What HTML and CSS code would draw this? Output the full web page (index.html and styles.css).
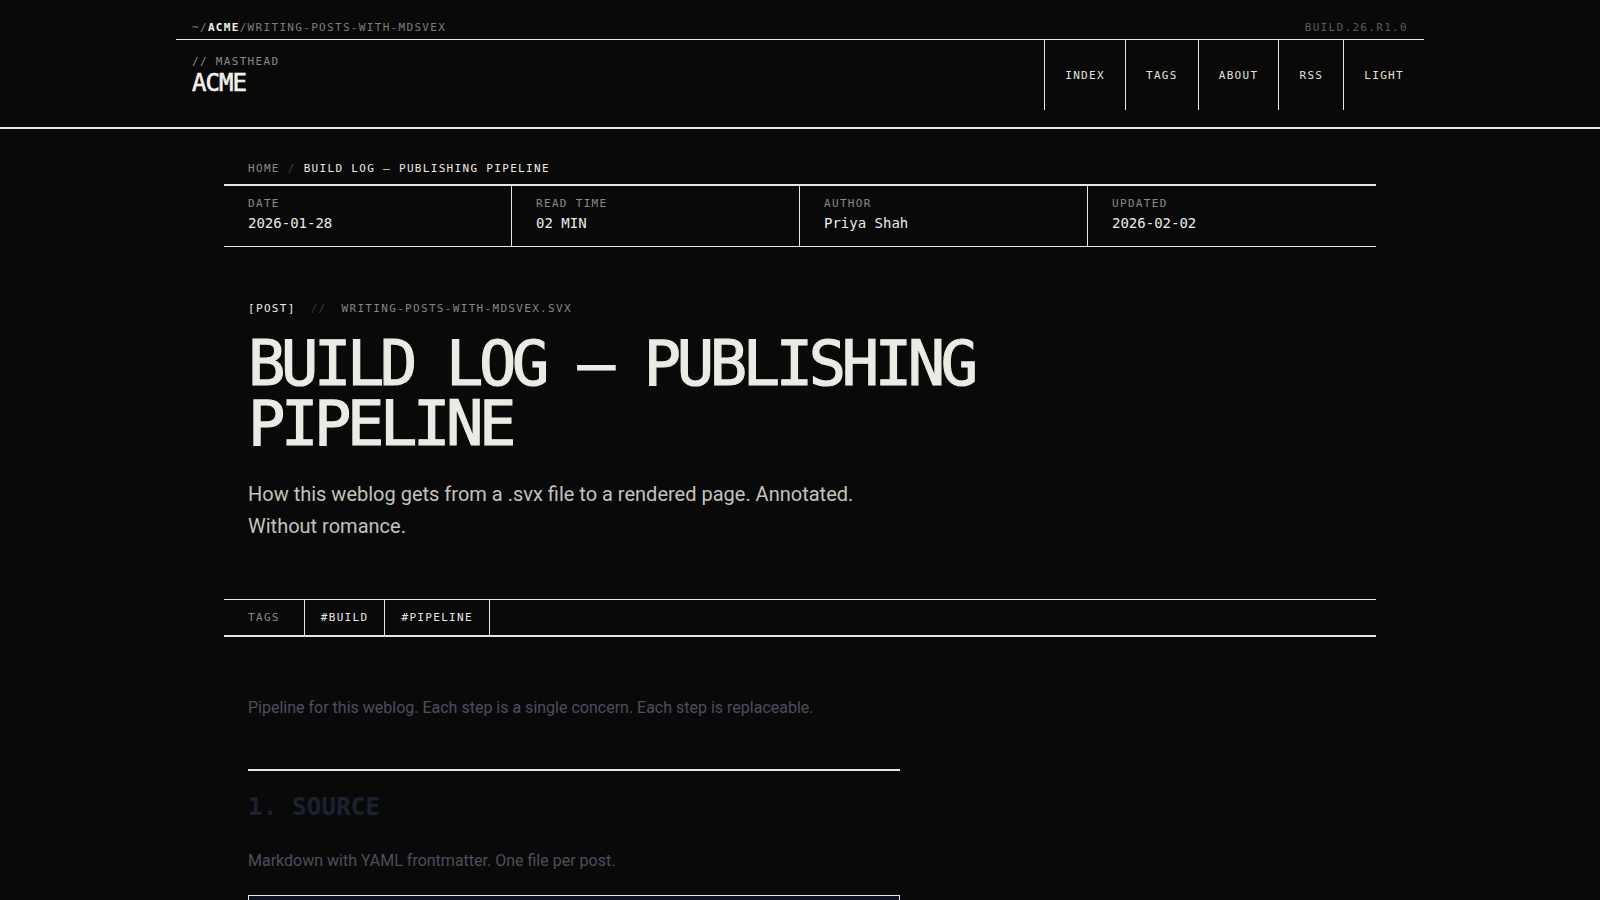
FILE: index.html
```html
<!DOCTYPE html>
<html lang="en">
<head>
<meta charset="utf-8">
<title>Build log — Publishing pipeline · ACME</title>
<link rel="stylesheet" href="styles.css">
</head>
<body>
<header class="site-header">
  <div class="header-inner">
    <div class="topbar">
      <div class="path"><span class="path-dim">~/</span><span class="path-root">ACME</span><span class="path-dim">/WRITING-POSTS-WITH-MDSVEX</span></div>
      <div class="build">BUILD.26.R1.0</div>
    </div>
    <div class="masthead-row">
      <div class="masthead">
        <div class="masthead-label">// MASTHEAD</div>
        <a class="brand" href="#">ACME</a>
      </div>
      <nav class="nav">
        <a class="nav-item" href="#">INDEX</a>
        <a class="nav-item" href="#">TAGS</a>
        <a class="nav-item" href="#">ABOUT</a>
        <a class="nav-item" href="#">RSS</a>
        <a class="nav-item" href="#">LIGHT</a>
      </nav>
    </div>
  </div>
</header>

<main class="page">
  <div class="crumbs"><a class="crumb-link" href="#">HOME</a> <span class="crumb-sep">/</span> <span class="crumb-current">BUILD LOG — PUBLISHING PIPELINE</span></div>

  <dl class="meta">
    <div class="meta-cell"><dt class="meta-label">DATE</dt><dd class="meta-value">2026-01-28</dd></div>
    <div class="meta-cell"><dt class="meta-label">READ TIME</dt><dd class="meta-value">02 MIN</dd></div>
    <div class="meta-cell"><dt class="meta-label">AUTHOR</dt><dd class="meta-value">Priya Shah</dd></div>
    <div class="meta-cell"><dt class="meta-label">UPDATED</dt><dd class="meta-value">2026-02-02</dd></div>
  </dl>

  <header class="post-head">
    <div class="kicker"><span class="kicker-type">[POST]</span><span class="kicker-sep">//</span><span class="kicker-file">WRITING-POSTS-WITH-MDSVEX.SVX</span></div>
    <h1 class="title">BUILD LOG — PUBLISHING PIPELINE</h1>
    <p class="lede">How this weblog gets from a .svx file to a rendered page. Annotated. Without romance.</p>
  </header>

  <div class="tags">
    <span class="tags-label">TAGS</span>
    <a class="tag" href="#">#BUILD</a>
    <a class="tag" href="#">#PIPELINE</a>
  </div>

  <article class="prose">
    <p>Pipeline for this weblog. Each step is a single concern. Each step is replaceable.</p>
    <hr class="rule">
    <h2 class="step">1. SOURCE</h2>
    <p>Markdown with YAML frontmatter. One file per post.</p>
    <pre class="code"><code>---
title: Build log — publishing pipeline
date: 2026-01-28
tags: [build, pipeline]
---</code></pre>
  </article>
</main>
</body>
</html>
```

FILE: styles.css
```css
* {
  box-sizing: border-box;
  margin: 0;
  padding: 0;
}

html,
body {
  background: #0a0909;
}

body {
  color: #e8e6e1;
  font-family: "DejaVu Sans Mono", "Liberation Mono", monospace;
}

a {
  color: inherit;
  text-decoration: none;
}

/* ---------- header ---------- */

.site-header {
  border-bottom: 2px solid #e8e6e1;
  padding-bottom: 17px;
}

.header-inner {
  width: 1248px;
  margin: 0 auto;
}

.topbar {
  display: flex;
  justify-content: space-between;
  align-items: flex-end;
  padding: 21px 16px 4px;
  border-bottom: 1px solid #e8e6e1;
  font-size: 11px;
  line-height: 14px;
  letter-spacing: 0.12em;
}

.path-dim {
  color: #7d7c79;
}

.path-root {
  color: #f2f0eb;
  font-weight: 700;
}

.build {
  color: #5a5957;
}

.masthead-row {
  display: flex;
  justify-content: space-between;
}

.masthead {
  padding: 15px 16px 0;
}

.masthead-label {
  font-size: 11px;
  line-height: 14px;
  letter-spacing: 0.12em;
  color: #8a8986;
}

.brand {
  display: block;
  font-size: 24px;
  line-height: 28px;
  font-weight: 400;
  letter-spacing: -0.04em;
  color: #f2f0eb;
  -webkit-text-stroke: 0.6px #f2f0eb;
}

.nav {
  display: flex;
  height: 70px;
}

.nav-item {
  display: flex;
  align-items: center;
  padding: 0 20px;
  border-left: 1px solid #e8e6e1;
  font-size: 11px;
  letter-spacing: 0.12em;
  color: #e4e2dd;
}

/* ---------- page ---------- */

.page {
  width: 1152px;
  margin: 0 auto;
  padding-top: 32px;
  padding-bottom: 80px;
}

.crumbs {
  padding: 0 24px;
  margin-bottom: 7px;
  font-size: 11px;
  line-height: 16px;
  letter-spacing: 0.12em;
}

.crumb-link {
  color: #8a8986;
}

.crumb-sep {
  color: #444340;
}

.crumb-current {
  color: #ecebe6;
}

.meta {
  display: grid;
  grid-template-columns: repeat(4, 1fr);
  border-top: 2px solid #e8e6e1;
  border-bottom: 1px solid #e8e6e1;
}

.meta-cell {
  padding: 11px 24px 13px;
}

.meta-cell:not(:last-child) {
  border-right: 1px solid #e8e6e1;
}

.meta-label {
  font-size: 11px;
  line-height: 14px;
  letter-spacing: 0.12em;
  color: #8a8986;
}

.meta-value {
  margin-top: 2px;
  font-size: 14px;
  line-height: 20px;
  color: #ecebe6;
}

/* ---------- post head ---------- */

.post-head {
  padding: 55px 24px 57px;
}

.kicker {
  display: flex;
  gap: 15px;
  font-size: 11px;
  line-height: 14px;
  letter-spacing: 0.12em;
}

.kicker-type {
  color: #ecebe6;
}

.kicker-sep {
  color: #3f3e3c;
}

.kicker-file {
  color: #878683;
}

.title {
  margin-top: 18px;
  max-width: 900px;
  font-size: 62px;
  line-height: 60px;
  font-weight: 400;
  letter-spacing: -0.07em;
  color: #eceae5;
  -webkit-text-stroke: 1.2px #eceae5;
}

.lede {
  margin-top: 24px;
  max-width: 640px;
  font-family: "Roboto", "Noto Sans", sans-serif;
  font-size: 20px;
  line-height: 32px;
  font-weight: 400;
  color: #c4c2bd;
}

/* ---------- tags ---------- */

.tags {
  display: flex;
  border-top: 1px solid #e8e6e1;
  border-bottom: 2px solid #e8e6e1;
  font-size: 11px;
  line-height: 15px;
  letter-spacing: 0.12em;
}

.tags-label {
  padding: 10px 24px;
  color: #8a8986;
}

.tag {
  padding: 10px 16px;
  border-left: 1px solid #e8e6e1;
  color: #e8e6e1;
}

.tag:last-child {
  border-right: 1px solid #e8e6e1;
}

/* ---------- prose ---------- */

.prose {
  margin-left: 24px;
  width: 652px;
  padding-top: 57px;
  font-family: "Roboto", "Noto Sans", sans-serif;
  font-size: 16px;
  line-height: 28px;
  color: #4a4f5c;
}

.rule {
  margin-top: 47px;
  border: 0;
  border-top: 2px solid #e8e6e1;
}

.step {
  margin-top: 22px;
  font-family: "DejaVu Sans Mono", monospace;
  font-size: 24px;
  line-height: 29px;
  font-weight: 700;
  letter-spacing: 0.01em;
  color: #1c2130;
}

.step + p {
  margin-top: 25px;
}

.code {
  margin-top: 20px;
  padding: 16px 20px;
  border: 1px solid #e8e6e1;
  background: #0e1321;
  font-family: "DejaVu Sans Mono", monospace;
  font-size: 13px;
  line-height: 20px;
  color: #5d6373;
}
```
